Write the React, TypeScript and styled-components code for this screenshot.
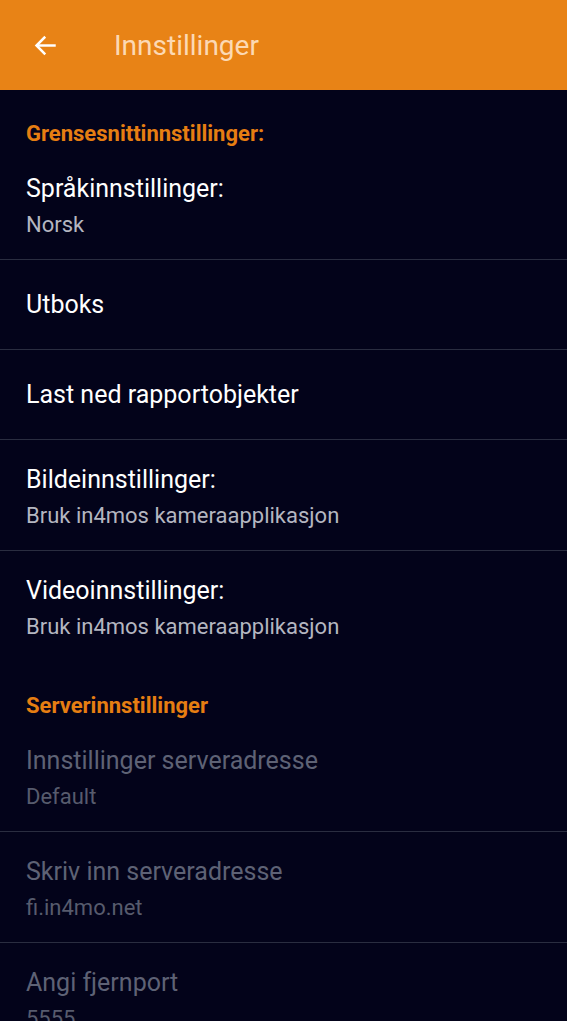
import { FC } from 'react'
import styled, { createGlobalStyle } from 'styled-components'

const GlobalStyle = createGlobalStyle`
  html, body {
    margin: 0;
    padding: 0;
    background: #03031a;
    font-family: Roboto, "Noto Sans", sans-serif;
  }
`

const Page = styled.div`
  width: 100%;
  min-height: 100vh;
  background: #03031a;
  overflow: hidden;
`

const TopBar = styled.header`
  height: 90px;
  background: #e88316;
  display: flex;
  align-items: center;
  padding-left: 29px;
  box-sizing: border-box;
`

const BackButton = styled.button`
  width: 32px;
  height: 32px;
  padding: 0;
  border: none;
  background: none;
  display: flex;
  align-items: center;
  justify-content: center;
  color: #ffffff;
`

const Title = styled.h1`
  margin: 0 0 0 53px;
  font-size: 28px;
  font-weight: 400;
  color: #fcd9b4;
`

const SectionLabel = styled.div`
  padding: 32px 26px 3px;
  font-size: 22px;
  line-height: 24px;
  font-weight: 700;
  color: #e67e12;
`

const Item = styled.div<{ $twoLine?: boolean; $divider?: boolean }>`
  box-sizing: border-box;
  height: ${p => (p.$twoLine ? 111 : 90)}px;
  padding: ${p => (p.$twoLine ? '4px 26px 0' : '0 26px')};
  display: flex;
  flex-direction: column;
  justify-content: center;
  gap: 8px;
  border-bottom: 1px solid ${p => (p.$divider ? '#2a2d40' : 'transparent')};
`

const ItemTitle = styled.div<{ $disabled?: boolean }>`
  font-size: 25px;
  line-height: 30px;
  color: ${p => (p.$disabled ? '#5e6275' : '#ffffff')};
`

const ItemSub = styled.div<{ $disabled?: boolean }>`
  font-size: 22px;
  line-height: 26px;
  color: ${p => (p.$disabled ? '#575b6d' : '#b4b6c0')};
`

interface IRow {
  title: string
  sub?: string
  divider?: boolean
  disabled?: boolean
}

const uiRows: IRow[] = [
  { title: 'Språkinnstillinger:', sub: 'Norsk', divider: true },
  { title: 'Utboks', divider: true },
  { title: 'Last ned rapportobjekter', divider: true },
  { title: 'Bildeinnstillinger:', sub: 'Bruk in4mos kameraapplikasjon', divider: true },
  { title: 'Videoinnstillinger:', sub: 'Bruk in4mos kameraapplikasjon' },
]

const serverRows: IRow[] = [
  { title: 'Innstillinger serveradresse', sub: 'Default', divider: true, disabled: true },
  { title: 'Skriv inn serveradresse', sub: 'fi.in4mo.net', divider: true, disabled: true },
  { title: 'Angi fjernport', sub: '5555', disabled: true },
]

const Row: FC<{ row: IRow }> = ({ row }) => (
  <Item $twoLine={!!row.sub} $divider={row.divider}>
    <ItemTitle $disabled={row.disabled}>{row.title}</ItemTitle>
    {row.sub && <ItemSub $disabled={row.disabled}>{row.sub}</ItemSub>}
  </Item>
)

const App: FC = () => (
  <Page>
    <GlobalStyle />
    <TopBar>
      <BackButton aria-label="Tilbake">
        <svg width="27" height="27" viewBox="0 0 24 24" fill="none" stroke="currentColor" strokeWidth="2.2" strokeLinecap="square">
          <path d="M20 12H5" />
          <path d="M11 5l-7 7 7 7" />
        </svg>
      </BackButton>
      <Title>Innstillinger</Title>
    </TopBar>

    <SectionLabel>Grensesnittinnstillinger:</SectionLabel>
    {uiRows.map(r => <Row key={r.title} row={r} />)}

    <SectionLabel>Serverinnstillinger</SectionLabel>
    {serverRows.map(r => <Row key={r.title} row={r} />)}
  </Page>
)

export default App
